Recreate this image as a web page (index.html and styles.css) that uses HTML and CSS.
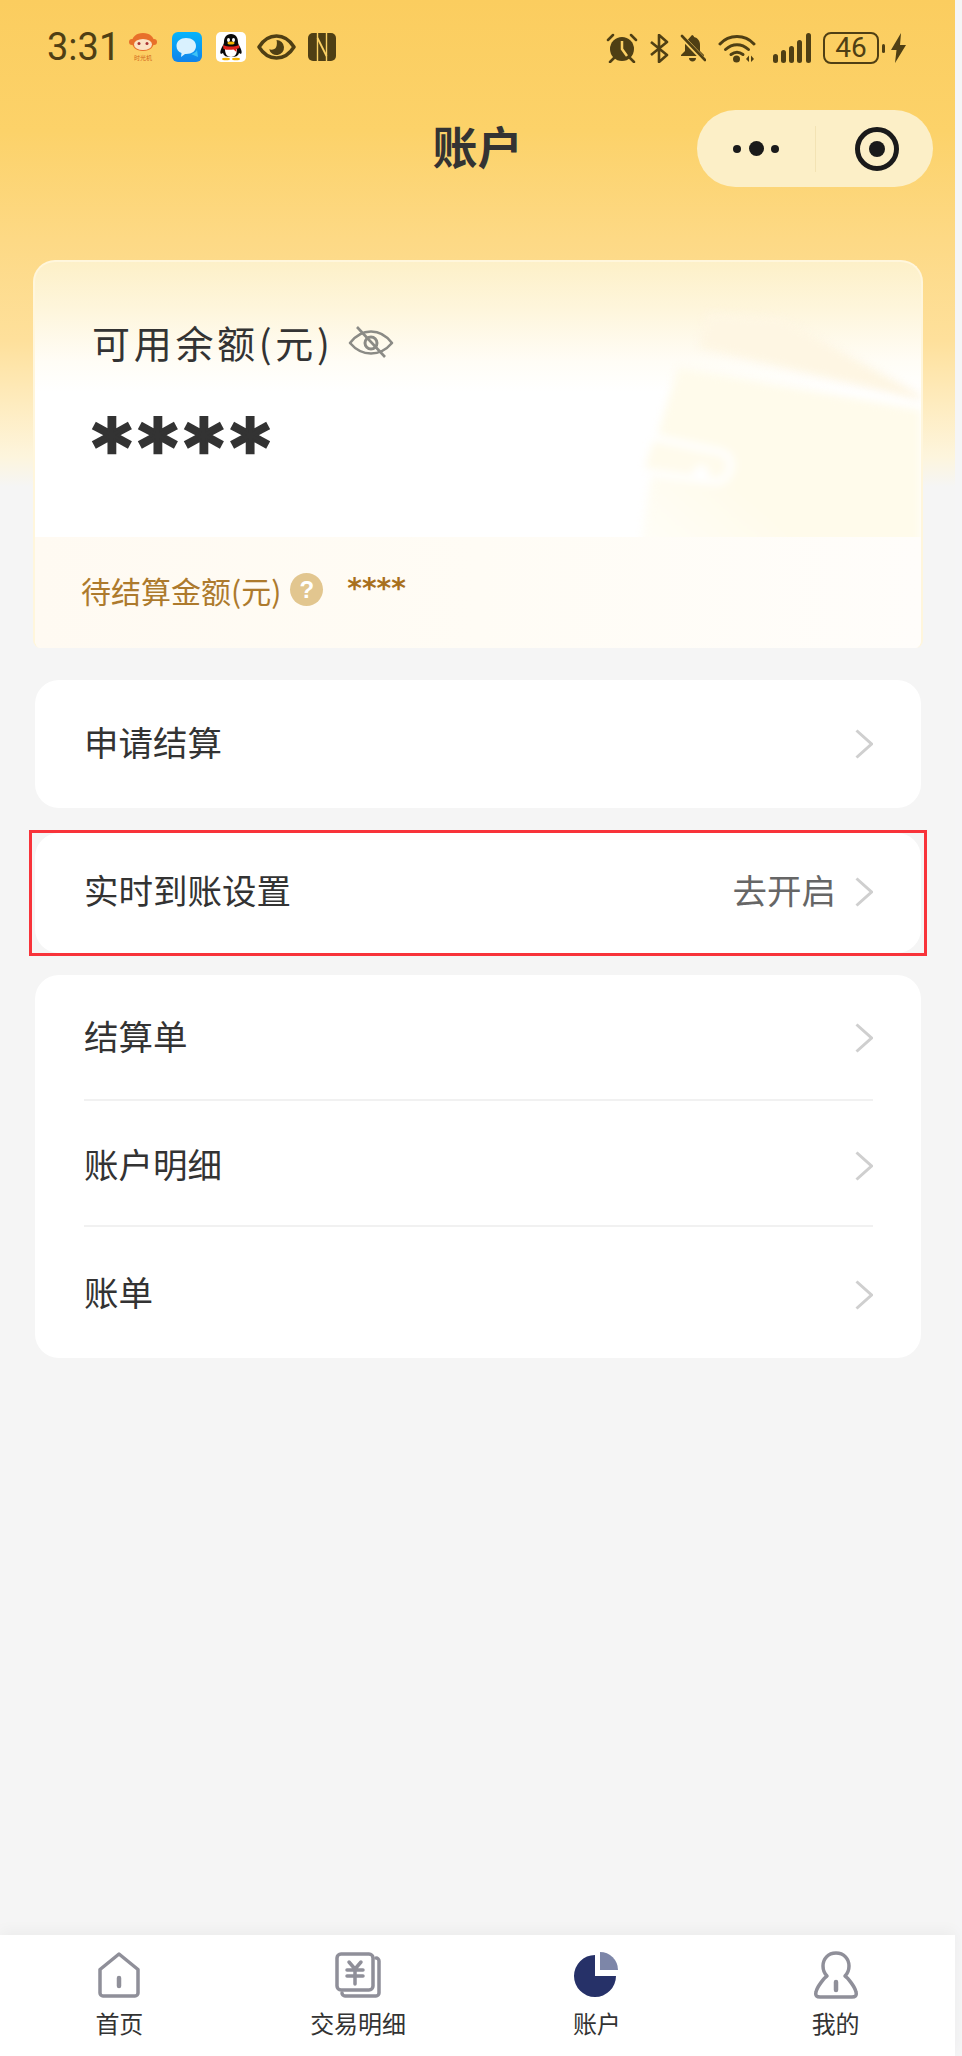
FILE: index.html
```html
<!doctype html>
<html lang="zh-CN">
<head>
	<meta charset="utf-8">
	<title>账户</title>
	<meta name="viewport" content="width=device-width, initial-scale=1">
	<link rel="stylesheet" href="styles.css">
</head>
<body>
<div class="page">

	<!-- status bar -->
	<div class="status">
		<div class="status-left">
			<span class="time">3:31</span>
			<svg class="ic-app" viewBox="0 0 30 30">
				<circle cx="4" cy="10" r="3" fill="#e8702a"/>
				<circle cx="26" cy="10" r="3" fill="#e8702a"/>
				<path d="M15 1c7 0 11 4 11 9s-4 9-11 9-11-4-11-9 4-9 11-9z" fill="#e8702a"/>
				<ellipse cx="15" cy="12.500" rx="9" ry="5.500" fill="#fbe3c4"/>
				<circle cx="11" cy="11.500" r="1.500" fill="#a33"/>
				<circle cx="19" cy="11.500" r="1.500" fill="#a33"/>
				<text class="app-text" x="15" y="28" text-anchor="middle">时光机</text>
			</svg>
			<svg class="ic-app" viewBox="0 0 30 30">
				<defs>
					<linearGradient id="blue" x1="0" y1="0" x2="0" y2="1">
						<stop offset="0" stop-color="#06b4fb"/>
						<stop offset="1" stop-color="#1283ea"/>
					</linearGradient>
				</defs>
				<rect width="30" height="30" rx="6" fill="url(#blue)"/>
				<path d="M14 6c6 0 10 3 10 8s-4 8-10 8h-1l-4 3 .5-4C6.500 20 4.500 17.500 4.500 14c0-5 4-8 9.500-8z" fill="#d9f1fe"/>
				<path d="M19 22c3-.5 5-2 6-4l1 7z" fill="#3fc3f5"/>
			</svg>
			<svg class="ic-app" viewBox="0 0 30 30">
				<rect width="30" height="30" rx="5" fill="#fff"/>
				<path d="M15 2c5 0 7 4 7 8 0 2 1 3 2 5 2 4 2 6 1 7l-2-1c-1 3-3 4-8 4s-7-1-8-4l-2 1c-1-1-1-3 1-7 1-2 2-3 2-5 0-4 2-8 7-8z" fill="#0a0a0a"/>
				<path d="M9 17c0 5 2 8 6 8s6-3 6-8z" fill="#fff"/>
				<ellipse cx="12.500" cy="8" rx="1.500" ry="2" fill="#fff"/>
				<ellipse cx="17.500" cy="8" rx="1.500" ry="2" fill="#fff"/>
				<ellipse cx="15" cy="11" rx="3.500" ry="1.500" fill="#f4b400"/>
				<path d="M7 13c5 2 11 2 16 0l.5 3-3 1v3l-3-2.500c-3 .5-7 .5-10-.5z" fill="#e0231c"/>
				<ellipse cx="10" cy="27" rx="4" ry="1.300" fill="#f4b400"/>
				<ellipse cx="20" cy="27" rx="4" ry="1.300" fill="#f4b400"/>
			</svg>
			<svg class="ic-eye" viewBox="0 0 39 26">
				<path d="M2 13C7 5 13 2 19.500 2S32 5 37 13c-5 8-11 11-17.500 11S7 21 2 13z" fill="none" stroke="#4f3f14" stroke-width="3.500" stroke-linejoin="round"/>
				<path d="M19.500 6a7.500 7.500 0 1 1-7.300 9.200c2 1 6 .5 7-2.200 1-2.500.8-5 .3-7z" fill="#4f3f14"/>
			</svg>
			<svg class="ic-nfc" viewBox="0 0 28 28">
				<rect width="28" height="28" rx="5" fill="#4f3f14"/>
				<path d="M9.500 0v28M18.500 0v28" stroke="#fbd064" stroke-width="1.400"/>
				<path d="M9.500 5l9 18" stroke="#fbd064" stroke-width="1.800"/>
			</svg>
		</div>
		<div class="status-right">
			<svg class="ic-alarm" viewBox="0 0 32 30">
				<circle cx="16" cy="16" r="12" fill="#4f3f14"/>
				<path d="M16 8v8l5 7" fill="none" stroke="#fbd064" stroke-width="2.500"/>
				<path d="M2 7l5-5M30 7l-5-5M4 29l4-4M28 29l-4-4" stroke="#4f3f14" stroke-width="2.500" stroke-linecap="round"/>
			</svg>
			<svg class="ic-bt" viewBox="0 0 20 29">
				<path d="M2 8l16 13-8 7V1l8 7L2 21" fill="none" stroke="#4f3f14" stroke-width="2.600" stroke-linejoin="round"/>
			</svg>
			<svg class="ic-bell" viewBox="0 0 26 28">
				<path d="M12 1c1 0 2 1 2 2 4 1 6 4 6 8v6l4 4v1H1v-1l4-4v-6c0-1 .3-2 .8-3z" fill="#4f3f14"/>
				<path d="M9 24h7c0 2-1.500 3.500-3.500 3.500S9 26 9 24z" fill="#4f3f14"/>
				<path d="M1 2l24 25" stroke="#fbd064" stroke-width="5"/>
				<path d="M2 2l23 24" stroke="#4f3f14" stroke-width="2.600" stroke-linecap="round"/>
			</svg>
			<svg class="ic-wifi" viewBox="0 0 38 30">
				<path d="M2 11C11 1 27 1 36 11" fill="none" stroke="#4f3f14" stroke-width="3" stroke-linecap="round"/>
				<path d="M7.500 16.500c7-6.500 16-6.500 23 0" fill="none" stroke="#4f3f14" stroke-width="3" stroke-linecap="round"/>
				<path d="M13 21.500c4-3 8-3 12 0" fill="none" stroke="#4f3f14" stroke-width="3" stroke-linecap="round"/>
				<circle cx="18.500" cy="26" r="3.500" fill="#4f3f14"/>
				<path d="M28 26l3-3.500V29zM33 22.500l3 3.500-3 3z" fill="#4f3f14"/>
			</svg>
			<svg class="ic-signal" viewBox="0 0 38 30">
				<rect x="0" y="21" width="5" height="9" rx="2.500" fill="#4f3f14"/>
				<rect x="8" y="17" width="5" height="13" rx="2.500" fill="#4f3f14"/>
				<rect x="16" y="13" width="5" height="17" rx="2.500" fill="#4f3f14"/>
				<rect x="24" y="7" width="5" height="23" rx="2.500" fill="#4f3f14"/>
				<rect x="33" y="0" width="5" height="30" rx="2.500" fill="#4f3f14"/>
			</svg>
			<div class="battery">
				<span class="battery-body">46</span>
				<span class="battery-nub"></span>
			</div>
			<svg class="ic-bolt" viewBox="0 0 15 30">
				<path d="M10 0L0 17h5.500L4 30l11-18H9z" fill="#4f3f14"/>
			</svg>
		</div>
	</div>

	<!-- title bar -->
	<div class="nav">
		<span></span>
		<h1>账户</h1>
		<div class="capsule">
			<div class="capsule-dots">
				<i class="dot"></i>
				<i class="dot dot-big"></i>
				<i class="dot"></i>
			</div>
			<div class="capsule-line"></div>
			<svg class="capsule-target" viewBox="0 0 44 44">
				<circle cx="22" cy="22" r="19.500" fill="none" stroke="#1a1a1a" stroke-width="5"/>
				<circle cx="22" cy="22" r="8" fill="#1a1a1a"/>
			</svg>
		</div>
	</div>

	<div class="main">

		<!-- balance card -->
		<div class="balance">
			<svg class="wallet" viewBox="0 0 400 320">
				<defs>
					<linearGradient id="fade" x1="0" y1="1" x2=".45" y2=".55">
						<stop offset="0" stop-color="#fff"/>
						<stop offset="1" stop-color="#fffbeb"/>
					</linearGradient>
				</defs>
				<g class="wallet-art">
					<path d="M187 11l73 5 140 77v5L178 45z" fill="#fef6e3"/>
					<path d="M157 65l243 43v212H110l10-80 17-109z" fill="url(#fade)"/>
					<path d="M130 135l70 15c9 3 11 9 9 18-3 9-9 13-19 11l-71-10z" fill="#fffbec" stroke="#fff" stroke-width="7"/>
					<circle cx="180" cy="171" r="8" fill="#fff"/>
				</g>
			</svg>
			<div class="balance-top">
				<div class="balance-label">
					<span>可用余额(元)</span>
					<svg class="ic-eyeoff" viewBox="0 0 46 32">
						<path d="M2 17C8 9 15 5.500 23 5.500S38 9 44 17c-6 7-13 10.500-21 10.500S8 24 2 17z" fill="none" stroke="#8b8b86" stroke-width="2.600" stroke-linejoin="round"/>
						<circle cx="23" cy="17" r="6" fill="none" stroke="#8b8b86" stroke-width="3"/>
						<path d="M9 1l28 30" stroke="#8b8b86" stroke-width="2.600"/>
					</svg>
				</div>
				<div class="balance-num">****</div>
			</div>
			<div class="balance-foot">
				<span>待结算金额(元)</span>
				<span class="help">?</span>
				<span class="foot-num">****</span>
			</div>
		</div>

		<!-- settle row -->
		<div class="list list-settle">
			<div class="row">
				<span class="row-name">申请结算</span>
				<svg class="chevron" viewBox="0 0 18 30"><path d="M1.500 1.500l15 13.500-15 13.500"/></svg>
			</div>
		</div>

		<!-- red frame marks this row -->
		<div class="mark">
			<div class="list list-marked">
				<div class="row">
					<span class="row-name">实时到账设置</span>
					<span class="row-value">去开启</span>
					<svg class="chevron" viewBox="0 0 18 30"><path d="M1.500 1.500l15 13.500-15 13.500"/></svg>
				</div>
			</div>
		</div>

		<div class="list list-more">
			<div class="row row-first">
				<span class="row-name">结算单</span>
				<svg class="chevron" viewBox="0 0 18 30"><path d="M1.500 1.500l15 13.500-15 13.500"/></svg>
			</div>
			<div class="row row-second">
				<span class="row-name">账户明细</span>
				<svg class="chevron" viewBox="0 0 18 30"><path d="M1.500 1.500l15 13.500-15 13.500"/></svg>
			</div>
			<div class="row row-last">
				<span class="row-name">账单</span>
				<svg class="chevron" viewBox="0 0 18 30"><path d="M1.500 1.500l15 13.500-15 13.500"/></svg>
			</div>
		</div>
	</div>

	<!-- bottom tabs -->
	<div class="tabs">
		<div class="tab">
			<svg class="tab-icon" viewBox="0 0 48 48">
				<path d="M24 3l19 15.500V42a3 3 0 0 1-3 3H8a3 3 0 0 1-3-3V18.500z" class="tab-line"/>
				<path d="M24 27v8" class="tab-line tab-thick"/>
			</svg>
			<span>首页</span>
		</div>
		<div class="tab">
			<svg class="tab-icon" viewBox="0 0 48 48">
				<rect x="3" y="3" width="36" height="36" rx="4" class="tab-line"/>
				<path d="M42 7a3 3 0 0 1 3 3v32a3 3 0 0 1-3 3H11a3 3 0 0 1-3-3" class="tab-line"/>
				<path d="M15 11l6 7 6-7M13 19h16M13 25h16M21 18v15" class="tab-line"/>
			</svg>
			<span>交易明细</span>
		</div>
		<div class="tab">
			<svg class="tab-icon" viewBox="0 0 48 48">
				<path d="M22 4v21h21A21 21 0 1 1 22 4z" fill="#263168"/>
				<path d="M27 1a18 18 0 0 1 18 18H27z" fill="#7d86a8"/>
			</svg>
			<span>账户</span>
		</div>
		<div class="tab">
			<svg class="tab-icon" viewBox="0 0 48 48">
				<path d="M24 2c8 0 13 6 13 13 0 5-2 8-4 10 3 2 10 11 11 16 1 4-1 5-4 5H8c-3 0-5-1-4-5 1-5 8-14 11-16-2-2-4-5-4-10 0-7 5-13 13-13z" class="tab-line"/>
				<path d="M24 31v8" class="tab-line tab-thick"/>
			</svg>
			<span>我的</span>
		</div>
	</div>

</div>
</body>
</html>
```

FILE: styles.css
```css
html, body, div, span, h1 {
	margin: 0;
	padding: 0;
	border: 0;
	font: inherit;
}
body {
	width: 962px;
	background-color: #f5f5f6;
	font-family: "Noto Sans CJK SC", "Noto Sans", sans-serif;
	color: #333;
}
svg {
	display: block;
	flex: none;
}

/*****/

.page {
	width: 955px;
	height: 2056px;
	display: flex;
	flex-direction: column;
	background: linear-gradient(#fbcd5f 0, #fcd269 130px, #fdd985 240px, #fee09b 340px, #feecc0 406px, #fdf5dd 457px, #f5f5f5 487px);
}

.status {
	height: 110px;
	padding: 31px 49px 0 47px;
	box-sizing: border-box;
	display: flex;
	justify-content: space-between;
	align-items: flex-start;
}
.status-left, .status-right {
	display: flex;
	align-items: center;
	height: 32px;
}
.status-right {
	margin-top: 1px;
}
.time {
	font-family: Roboto, sans-serif;
	font-size: 38px;
	line-height: 32px;
	color: #4f3f14;
	width: 66px;
	margin-right: 15px;
	white-space: nowrap;
}
.ic-app {
	width: 30px;
	height: 30px;
	margin-right: 14px;
}
.app-text {
	font-size: 6px;
	fill: #d2691e;
}
.ic-eye {
	width: 39px;
	height: 26px;
	margin: 0 12px 0 -3px;
}
.ic-nfc {
	width: 28px;
	height: 28px;
}
.ic-alarm {
	width: 32px;
	height: 30px;
	margin-right: 11px;
}
.ic-bt {
	width: 20px;
	height: 29px;
	margin-right: 11px;
}
.ic-bell {
	width: 26px;
	height: 28px;
	margin-right: 12px;
}
.ic-wifi {
	width: 38px;
	height: 30px;
	margin-right: 17px;
}
.ic-signal {
	width: 38px;
	height: 30px;
	margin-right: 12px;
}
.battery {
	display: flex;
	align-items: center;
	margin-right: 6px;
}
.battery-body {
	width: 56px;
	height: 32px;
	box-sizing: border-box;
	border: 2px solid #4f3f14;
	border-radius: 8px;
	font-family: Roboto, sans-serif;
	font-size: 28px;
	line-height: 28px;
	text-align: center;
	color: #4f3f14;
}
.battery-nub {
	width: 3px;
	height: 9px;
	margin-left: 3px;
	border-radius: 2px;
	background-color: #4f3f14;
}
.ic-bolt {
	width: 15px;
	height: 30px;
}

.nav {
	height: 77px;
	margin-bottom: 73px;
	padding-right: 22px;
	display: grid;
	grid-template-columns: 1fr auto 1fr;
	align-items: center;
}
h1 {
	font-size: 45px;
	font-weight: 700;
	line-height: 71px;
	height: 77px;
	color: #333;
	padding-left: 22px;
	box-sizing: border-box;
}
.capsule {
	justify-self: end;
	width: 236px;
	height: 77px;
	border-radius: 39px;
	background-color: #fcefc7;
	display: flex;
	align-items: center;
	box-sizing: border-box;
	padding-left: 36px;
}
.capsule-dots {
	width: 46px;
	display: flex;
	justify-content: space-between;
	align-items: center;
}
.dot {
	width: 8px;
	height: 8px;
	border-radius: 50%;
	background-color: #1a1a1a;
}
.dot-big {
	width: 15px;
	height: 15px;
}
.capsule-line {
	width: 1px;
	height: 46px;
	margin-left: 36px;
	background-color: #f3e3b4;
}
.capsule-target {
	width: 44px;
	height: 44px;
	margin-left: 39px;
}

.main {
	flex: 1;
}

.balance {
	position: relative;
	width: 890px;
	height: 388px;
	margin-left: 33px;
	box-sizing: border-box;
	border: 2px solid #fff6dc;
	border-bottom: 0;
	border-radius: 22px 22px 8px 8px;
	background: linear-gradient(#fdf0c8 0, #fef6dd 50px, #fffdf6 100px, #fff 130px);
	overflow: hidden;
}
.wallet {
	position: absolute;
	right: 0;
	top: 40px;
	width: 400px;
	height: 320px;
}
.wallet-art {
	filter: blur(4px);
}
.balance-top {
	position: relative;
	height: 275px;
	padding: 55px 0 0 57px;
	box-sizing: border-box;
}
.balance-label {
	display: flex;
	align-items: center;
	height: 50px;
	font-size: 38px;
	letter-spacing: 3.700px;
	line-height: 50px;
	color: #333;
}
.ic-eyeoff {
	width: 46px;
	height: 32px;
	margin-left: 14px;
}
.balance-num {
	margin-top: 39px;
	font-family: "DejaVu Sans", sans-serif;
	font-weight: 700;
	font-size: 76px;
	line-height: 84px;
	letter-spacing: 6.300px;
	color: #333;
	-webkit-text-stroke: 2.500px #333;
}
.balance-foot {
	position: relative;
	height: 111px;
	padding: 0 0 6px 46px;
	box-sizing: border-box;
	display: flex;
	align-items: center;
	font-size: 30px;
	color: #ad7a2d;
	background: linear-gradient(90deg, #fffaf2, #fffcf5 50%, #fffdfa);
}
.help {
	width: 33px;
	height: 33px;
	margin-left: 9px;
	border-radius: 50%;
	background-color: #e2c68f;
	color: #fff;
	font-family: "Liberation Sans", sans-serif;
	font-weight: 700;
	font-size: 24px;
	line-height: 33px;
	text-align: center;
}
.foot-num {
	margin: -3px 0 0 24px;
	font-family: "DejaVu Sans", sans-serif;
	font-weight: 700;
	font-size: 28px;
	color: #a8701e;
}

.list {
	width: 886px;
	background-color: #fff;
	border-radius: 24px;
	box-sizing: border-box;
}
.list-settle {
	height: 128px;
	margin: 32px 0 0 35px;
}
.mark {
	width: 898px;
	height: 126px;
	margin: 22px 0 0 29px;
	padding: 0 3px;
	box-sizing: border-box;
	border: 3px solid #f8333a;
}
.list-marked {
	height: 120px;
}
.list-more {
	height: 383px;
	margin: 19px 0 0 35px;
}
.row {
	height: 100%;
	margin: 0 48px 0 49px;
	display: flex;
	align-items: center;
	box-sizing: border-box;
	font-size: 34.500px;
	color: #333;
}
.list-marked .row {
	padding-bottom: 2px;
}
.row-first {
	height: 124px;
	padding-top: 2px;
}
.row-second {
	height: 128px;
	padding-top: 6px;
	border-top: 2px solid #f1f1f1;
	border-bottom: 2px solid #f1f1f1;
}
.row-last {
	height: 131px;
	padding-top: 4px;
}
.row-name, .row-value {
	padding-bottom: 7px;
}
.row-name {
	flex: 1;
}
.row-value {
	color: #666;
	margin-right: 19px;
}
.chevron {
	width: 18px;
	height: 30px;
	fill: none;
	stroke: #cfcfcf;
	stroke-width: 3;
}

.tabs {
	height: 121px;
	background-color: #fff;
	box-shadow: 0 -4px 14px rgba(0, 0, 0, .04);
	display: grid;
	grid-template-columns: repeat(4, 1fr);
}
.tab {
	display: flex;
	flex-direction: column;
	align-items: center;
	padding-top: 16px;
	font-size: 24px;
	line-height: 34px;
	color: #333;
}
.tab-icon {
	width: 48px;
	height: 48px;
	margin-bottom: 7px;
}
.tab-line {
	fill: none;
	stroke: #8f8f99;
	stroke-width: 3.500;
	stroke-linejoin: round;
	stroke-linecap: round;
}
.tab-thick {
	stroke-width: 4.500;
}
```
